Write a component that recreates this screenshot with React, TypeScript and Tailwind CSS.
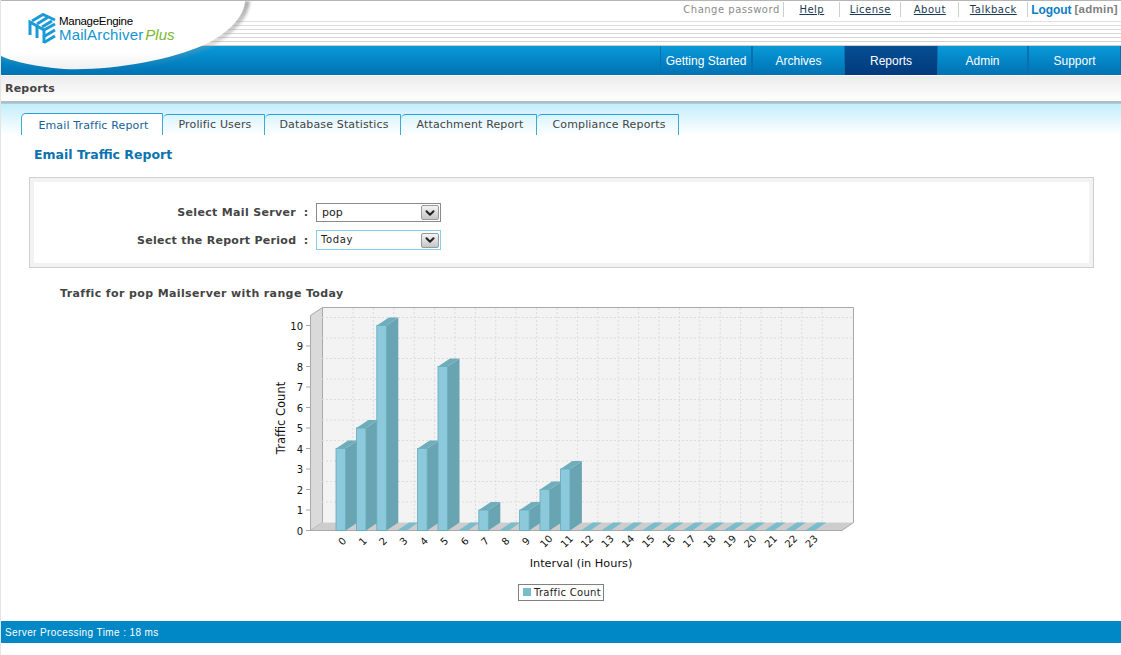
import { ChevronDown } from "lucide-react";

const topLinks = [
  { label: "Help", className: "w-[56px]" },
  { label: "License", className: "w-[61px]" },
  { label: "About", className: "w-[58px]" },
  { label: "Talkback", className: "w-[69px]" },
];

const navItems = [
  { label: "Getting Started", className: "w-[92px]" },
  { label: "Archives", className: "w-[93px]" },
  { label: "Reports", className: "w-[92px]" },
  { label: "Admin", className: "w-[91px]" },
  { label: "Support", className: "w-[93px]" },
];

const tabs = [
  { label: "Email Traffic Report", className: "w-[142px]", active: true },
  { label: "Prolific Users", className: "w-[102px]" },
  { label: "Database Statistics", className: "w-[136px]" },
  { label: "Attachment Report", className: "w-[136px]" },
  { label: "Compliance Reports", className: "w-[142px]" },
];

const barValues: Record<number, number> = { 0: 4, 1: 5, 2: 10, 4: 4, 5: 8, 7: 1, 9: 1, 10: 2, 11: 3 };
const hours = Array.from({ length: 24 }, (_, i) => i);
const ticks = Array.from({ length: 11 }, (_, i) => i);

// chart svg starts at page x=270, y=300
const bx = (hour: number) => 66 + hour * 20.4;
const vy = (value: number) => 230.5 - value * 20.5;

function TrafficChart() {
  return (
    <svg width="600" height="310" viewBox="0 0 600 310" className="block">
      <polygon points="40.5,15.5 52.5,7.5 583.5,7.5 583.5,222.5 52.5,222.5 40.5,230.5" fill="#f3f3f4" />
      <polygon points="40.5,15.5 52.5,7.5 52.5,222.5 40.5,230.5" fill="#dadada" stroke="#a9a9a9" />
      <polygon points="40.5,230.5 52.5,222.5 583.5,222.5 572,230.5" fill="#cdcdcd" />
      <path d="M52.5 7.5H583.5V222.5L572 230.5" fill="none" stroke="#a9a9a9" />
      <line x1="40" y1="230.5" x2="572" y2="230.5" stroke="#a9a9a9" />
      {ticks.slice(1).map((t) => (
        <line key={t} x1="52" x2="583" y1={vy(t) - 8} y2={vy(t) - 8} stroke="#dcdcdf" strokeDasharray="2 2" />
      ))}
      {hours.map((h) => (
        <line key={h} x1={bx(h) + 17} x2={bx(h) + 17} y1="8" y2="222" stroke="#dcdcdf" strokeDasharray="2 2" />
      ))}
      {hours.map((h) => {
        const v = barValues[h];
        const x = bx(h);
        if (!v) {
          return <polygon key={h} points={`${x},230.5 ${x + 12},222.5 ${x + 21},222.5 ${x + 9.5},230.5`} fill="#79bccb" />;
        }
        const top = vy(v);
        return (
          <g key={h}>
            <polygon points={`${x + 9.5},${top} ${x + 21.5},${top - 8} ${x + 21.5},222.5 ${x + 9.5},230.5`} fill="#69a4b2" />
            <polygon points={`${x},${top} ${x + 12},${top - 8} ${x + 21.5},${top - 8} ${x + 9.5},${top}`} fill="#6fadbb" />
            <rect x={x} y={top} width="9.5" height={230.5 - top} fill="#8ccadb" stroke="#62abbd" strokeWidth="0.8" />
          </g>
        );
      })}
      {ticks.map((t) => (
        <text key={t} x="33" y={vy(t) + 4} textAnchor="end" fontSize="10" fill="#111" fontFamily="'DejaVu Sans', sans-serif">
          {t}
        </text>
      ))}
      {ticks.map((t) => (
        <line key={t} x1="36" x2="40" y1={vy(t)} y2={vy(t)} stroke="#a9a9a9" />
      ))}
      {hours.map((h) => (
        <text
          key={h}
          x={bx(h) + 6}
          y="245"
          textAnchor="middle"
          fontSize="10"
          fill="#111"
          fontFamily="'DejaVu Sans', sans-serif"
          transform={`rotate(-45 ${bx(h) + 6} 241)`}
        >
          {h}
        </text>
      ))}
      <text
        x="15"
        y="118"
        textAnchor="middle"
        fontSize="11.5"
        fill="#111"
        fontFamily="'DejaVu Sans', sans-serif"
        transform="rotate(-90 15 118)"
      >
        Traffic Count
      </text>
      <text x="311" y="267" textAnchor="middle" fontSize="11.3" fill="#111" fontFamily="'DejaVu Sans', sans-serif">
        Interval (in Hours)
      </text>
      <rect x="248.5" y="284.5" width="85" height="16" fill="#fff" stroke="#808080" />
      <rect x="253" y="288" width="8" height="8" fill="#79bccb" />
      <text x="264" y="296" fontSize="10" fill="#222" letterSpacing="0.3" fontFamily="'DejaVu Sans', sans-serif">
        Traffic Count
      </text>
    </svg>
  );
}

function LogoSwoosh() {
  return (
    <div className="absolute left-0 top-[1px] w-[270px] h-[74px]">
      <svg width="270" height="74" viewBox="0 0 270 74" className="absolute left-0 top-0">
        <defs>
          <linearGradient id="swooshEdge" x1="0" y1="0" x2="0" y2="1">
            <stop offset="0" stopColor="#8f8f8f" stopOpacity="0.75" />
            <stop offset="0.6" stopColor="#9a9a9a" stopOpacity="0.35" />
            <stop offset="1" stopColor="#9a9a9a" stopOpacity="0" />
          </linearGradient>
          <linearGradient id="swooshFill" x1="0" y1="0" x2="0" y2="1">
            <stop offset="0" stopColor="#ffffff" />
            <stop offset="0.75" stopColor="#ffffff" />
            <stop offset="1" stopColor="#f0f0f0" />
          </linearGradient>
          <filter id="swooshBlur" x="-20%" y="-20%" width="140%" height="140%">
            <feGaussianBlur stdDeviation="1.6" />
          </filter>
        </defs>
        <path
          d="M246 0C245 14 232 32 205 45C165 62 95 74 50 68C25 65 8 60 0 55"
          fill="none"
          stroke="url(#swooshEdge)"
          strokeWidth="6"
          filter="url(#swooshBlur)"
        />
        <path d="M0 0H244C243 14 230 31 203 44C165 61 95 72 52 67C27 64 8 59 0 55Z" fill="url(#swooshFill)" />
      </svg>
      <svg width="28" height="31" viewBox="0 0 28 31" className="absolute left-[27px] top-[12px]" fill="none" stroke="#1a9ad6" strokeWidth="3">
        <path d="M4 8L15 1.5L27 7" />
        <path d="M9 11L19.5 4.5" />
        <path d="M14 14L24 8" />
        <path d="M2 22V9L16 17V30" />
        <path d="M9 25V13" />
        <path d="M16 17L27 11" />
        <path d="M16 23.5L27 17" />
        <path d="M16 29.5L27 23" />
      </svg>
      <div className="absolute left-[58px] top-[13px] font-['Liberation_Sans',sans-serif] text-[11.5px] leading-[14px] tracking-[-0.3px] text-black">
        ManageEngine
      </div>
      <div className="absolute left-[58px] top-[25px] flex items-baseline whitespace-nowrap font-['Liberation_Sans',sans-serif] leading-[18px]">
        <span className="text-[15px] tracking-[0.15px] text-[#1496d2]">MailArchiver</span>
        <span className="ml-[2px] text-[15px] italic text-[#7ab82a]">Plus</span>
      </div>
    </div>
  );
}

function SelectBox({ value, focused }: { value: string; focused?: boolean }) {
  return (
    <div
      className={
        focused
          ? "flex h-[20px] w-[125px] items-center justify-between border border-[#7fd0f2] pl-[4px] pr-[1px] text-[10px] tracking-[0.6px] text-[#222]"
          : "flex h-[19px] w-[125px] items-center justify-between border border-[#8a8a8a] pl-[5px] pr-[1px] text-[11px] text-[#222]"
      }
    >
      <span className={focused ? "-mt-[1px]" : "pt-[2px]"}>{value}</span>
      <span className="flex h-[15px] w-[18px] items-center justify-center rounded-[2px] border border-[#9a9a9a] bg-gradient-to-b from-[#f4f4f4] to-[#c6c6c6]">
        <ChevronDown size={14} strokeWidth={3.5} className="text-[#222]" />
      </span>
    </div>
  );
}

export default function App() {
  return (
    <div className="relative h-[655px] w-[1121px] overflow-hidden border-l border-[#e4e4e4] bg-white font-['DejaVu_Sans',sans-serif]">
      <div className="h-[1px] bg-[#b5b5b5]" />

      {/* top links + striped band */}
      <div className="flex h-[45px] flex-col">
        <div className="flex h-[17px] items-center justify-end bg-white pr-[3px] text-[10px] tracking-[0.5px]">
          <span className="w-[101px] border-r border-[#cfcfcf] text-[#8c8c8c]">Change password</span>
          {topLinks.map((link) => (
            <span key={link.label} className={`${link.className} border-r border-[#cfcfcf] text-center text-[#1d3a55] underline`}>
              {link.label}
            </span>
          ))}
          <span className="ml-[3px] font-['Liberation_Sans',sans-serif] text-[12px] font-bold tracking-[-0.1px] text-[#0f7cc4]">Logout</span>
          <span className="ml-[3px] font-['Liberation_Sans',sans-serif] text-[11.5px] font-bold tracking-[0.3px] text-[#808080]">[admin]</span>
        </div>
        <div className="flex-1 bg-[linear-gradient(to_bottom,rgba(255,255,255,0.4),rgba(255,255,255,0)),repeating-linear-gradient(to_bottom,#ffffff_0,#ffffff_3px,#cfcfcf_3px,#cfcfcf_4px)]" />
      </div>

      {/* nav */}
      <div className="flex h-[29px] justify-end bg-gradient-to-b from-[#0a9ad8] to-[#0071b3]">
        {navItems.map((item) => (
          <div
            key={item.label}
            className={
              item.label === "Reports"
                ? `${item.className} flex items-center justify-center bg-gradient-to-b from-[#064f93] to-[#013a7c] font-['Liberation_Sans',sans-serif] text-[12px] text-white`
                : `${item.className} flex items-center justify-center border-x border-[#0a6fb0] font-['Liberation_Sans',sans-serif] text-[12px] text-white`
            }
          >
            {item.label}
          </div>
        ))}
      </div>

      {/* breadcrumb bar */}
      <div className="mt-[1px] flex h-[27px] items-center border-b-2 border-[#b9b9b9] bg-gradient-to-b from-[#ececec] to-[#ffffff] pl-[4px] pt-[1px] text-[11px] font-bold tracking-[0.2px] text-[#444]">
        Reports
      </div>

      {/* tabs */}
      <div className="flex h-[32px] items-end border-t border-[#8fd6ee] bg-gradient-to-b from-[#c3eefb] to-[#ffffff] pl-[20px]">
        {tabs.map((tab) =>
          tab.active ? (
            <div
              key={tab.label}
              className={`${tab.className} flex h-[22px] items-center justify-center rounded-tl-[5px] border-x border-t border-x-[#3ea8da] border-t-[#2a9ed6] bg-white pl-[3px] pt-[3px] text-[11px] tracking-[0.15px] text-[#14639a]`}
            >
              {tab.label}
            </div>
          ) : (
            <div
              key={tab.label}
              className={`${tab.className} flex h-[21px] items-center justify-center rounded-tl-[5px] border-t border-r border-t-[#2a9ed6] border-r-[#3ea8da] pl-[3px] text-[11px] tracking-[0.15px] text-[#444]`}
            >
              {tab.label}
            </div>
          ),
        )}
      </div>

      {/* content */}
      <div className="pl-[28px] pr-[27px]">
        <h1 className="ml-[5px] mt-[11px] text-[12.5px] font-bold leading-[17px] text-[#0b73b0]">Email Traffic Report</h1>

        <div className="mt-[14px] h-[91px] border border-[#cfcfcf]">
          <div className="flex h-full w-full flex-col gap-[8px] border-4 border-[#f2f2f2] bg-white pl-[103px] pt-[21px]">
            <div className="flex items-center">
              <span className="pt-[2px] w-[159px] text-right text-[11px] font-bold tracking-[0.33px] text-[#444]">Select Mail Server</span>
              <span className="pt-[2px] w-[20px] text-center text-[11px] font-bold text-[#444]">:</span>
              <SelectBox value="pop" />
            </div>
            <div className="flex items-center">
              <span className="pt-[2px] w-[159px] whitespace-nowrap text-right text-[11px] font-bold tracking-[0.28px] text-[#444]">Select the Report Period</span>
              <span className="pt-[2px] w-[20px] text-center text-[11px] font-bold text-[#444]">:</span>
              <SelectBox value="Today" focused />
            </div>
          </div>
        </div>

        <div className="ml-[31px] mt-[19px] text-[11px] font-bold leading-[14px] tracking-[0.38px] text-[#444]">Traffic for pop Mailserver with range Today</div>

        <div className="-mt-[1px] ml-[241px]">
          <TrafficChart />
        </div>
      </div>

      <div className="absolute bottom-[12px] left-0 right-0 flex h-[22px] items-center bg-[#0088c6] pl-[4px] font-['Liberation_Sans',sans-serif] text-[10px] tracking-[0.4px] text-white">
        Server Processing Time : 18 ms
      </div>

      <LogoSwoosh />
    </div>
  );
}
